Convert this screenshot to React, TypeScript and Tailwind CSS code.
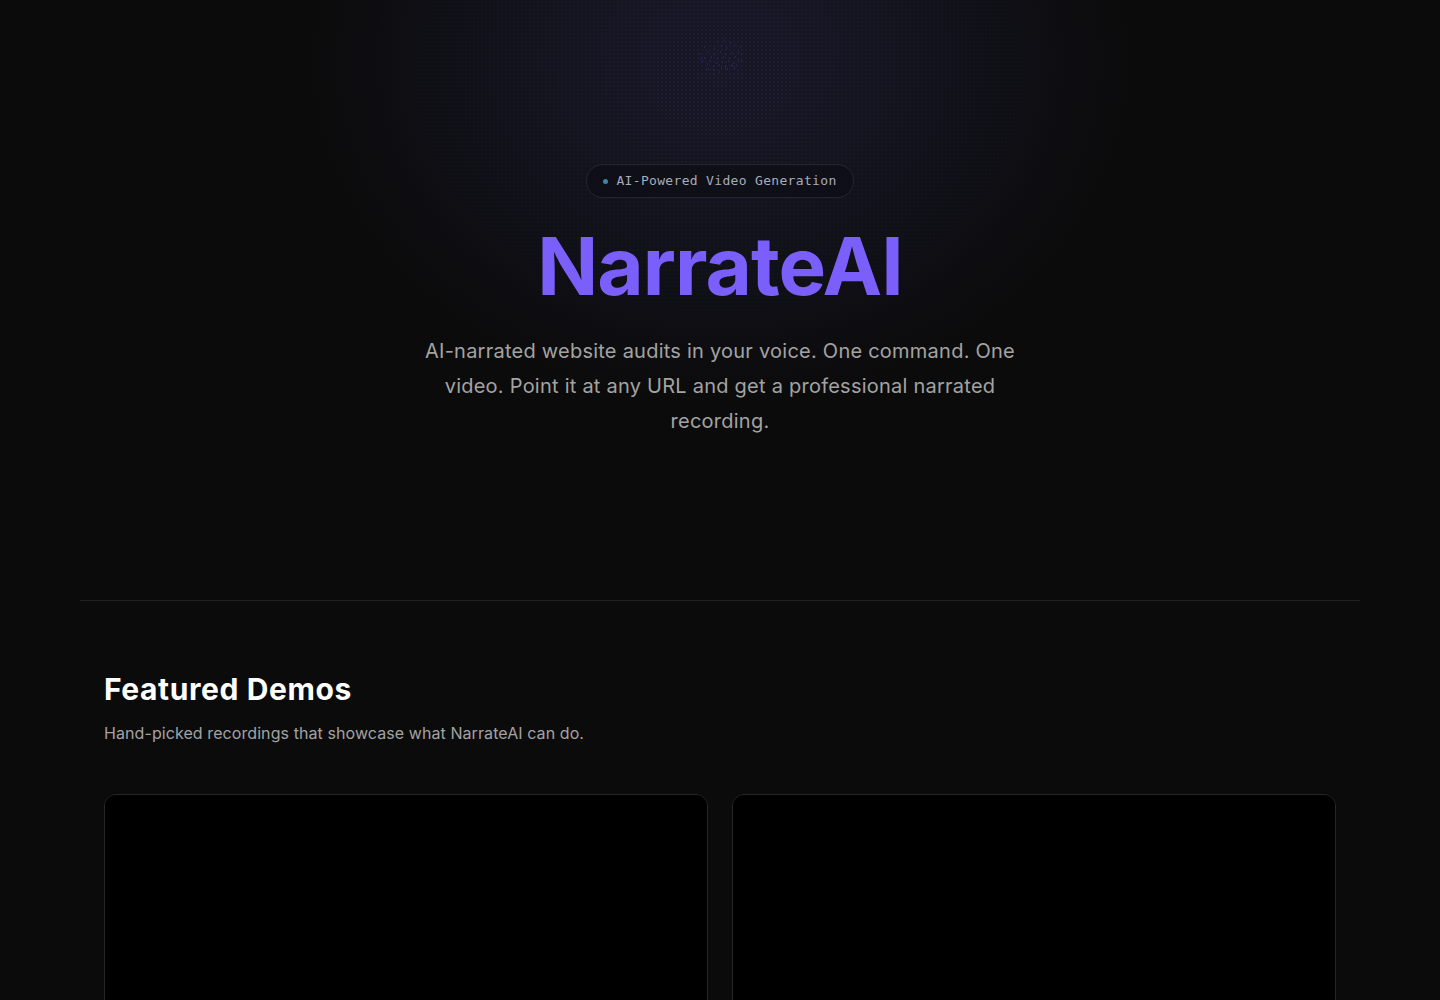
import React from "react";

const particles: [number, number][] = [
  [95, 45], [102, 44], [108, 47], [82, 51], [92, 52], [99, 50], [104, 52], [112, 49], [118, 51],
  [77, 58], [86, 56], [92, 58], [98, 56], [103, 58], [110, 57], [116, 56],
  [82, 62], [89, 61], [95, 63], [101, 61], [107, 62], [113, 61], [119, 58],
  [88, 65], [94, 67], [100, 66], [106, 65], [111, 67], [116, 64],
  [80, 65], [85, 68], [91, 70], [97, 69], [103, 70], [109, 69], [114, 69], [119, 65],
  [86, 73], [92, 74], [99, 72], [105, 73], [110, 70],
  [91, 78], [97, 76], [103, 72], [112, 72],
  [84, 73], [78, 63],
];

function Particles() {
  return (
    <svg width="60" height="40" viewBox="70 40 55 40" className="absolute left-1/2 top-[36px] -translate-x-1/2">
      {particles.map(([x, y], i) => (
        <circle key={i} cx={x} cy={y} r="0.6" fill="#4a3f8a" opacity="0.8" />
      ))}
    </svg>
  );
}

export default function App() {
  return (
    <div
      className="min-h-screen bg-[#0b0b0b] text-white"
      style={{ fontFamily: "Inter, 'Noto Sans', sans-serif" }}
    >
      <section className="relative overflow-hidden">
        <div className="pointer-events-none absolute inset-0 bg-[radial-gradient(ellipse_420px_350px_at_50%_60px,#171729_0%,#141420_38%,#0f0f16_68%,#0b0b0b_100%)]" />
        <div className="pointer-events-none absolute inset-0 bg-[radial-gradient(circle,rgba(255,255,255,0.035)_1px,transparent_1px)] bg-[length:4px_4px] [mask-image:radial-gradient(ellipse_420px_320px_at_50%_80px,black,transparent)]" />
        <Particles />
        <div className="relative flex flex-col items-center pt-[164px] pb-[161px]">
          <div className="flex h-[34px] items-center gap-2 rounded-full border border-[#25252f] bg-[#0e0e16]/80 px-4">
            <span className="h-[5px] w-[5px] rounded-full bg-[#3f86a8]" />
            <span
              className="-mt-px text-[13px] leading-none tracking-[0.025em] text-[#a6adbb]"
              style={{ fontFamily: "'DejaVu Sans Mono', 'Liberation Mono', monospace" }}
            >
              AI-Powered Video Generation
            </span>
          </div>
          <h1 className="mt-[28px] text-[80px] font-bold leading-[80px] tracking-[-0.012em] text-[#7b5ffa]">
            NarrateAI
          </h1>
          <p className="mt-[28px] max-w-[620px] text-center text-[20px] leading-[35px] tracking-[0.012em] text-[#a3a3a3]">
            AI-narrated website audits in your voice. One command. One video. Point it at any URL and get a
            professional narrated recording.
          </p>
        </div>
      </section>

      <div className="mx-auto max-w-[1280px]">
        <div className="h-px bg-[#222222]" />
        <section className="px-6 pt-[70px]">
          <h2 className="text-[30px] font-bold leading-[36px] tracking-[0.02em] text-white">Featured Demos</h2>
          <p className="mt-[14px] text-[16px] leading-[24px] tracking-[0.005em] text-[#a3a3a3]">
            Hand-picked recordings that showcase what NarrateAI can do.
          </p>
          <div className="mt-[49px] grid grid-cols-2 gap-6">
            {[0, 1].map((i) => (
              <div key={i} className="overflow-hidden rounded-xl border border-[#262626] bg-[#141414]">
                <div className="aspect-video bg-black" />
                <div className="h-24" />
              </div>
            ))}
          </div>
        </section>
      </div>
    </div>
  );
}
